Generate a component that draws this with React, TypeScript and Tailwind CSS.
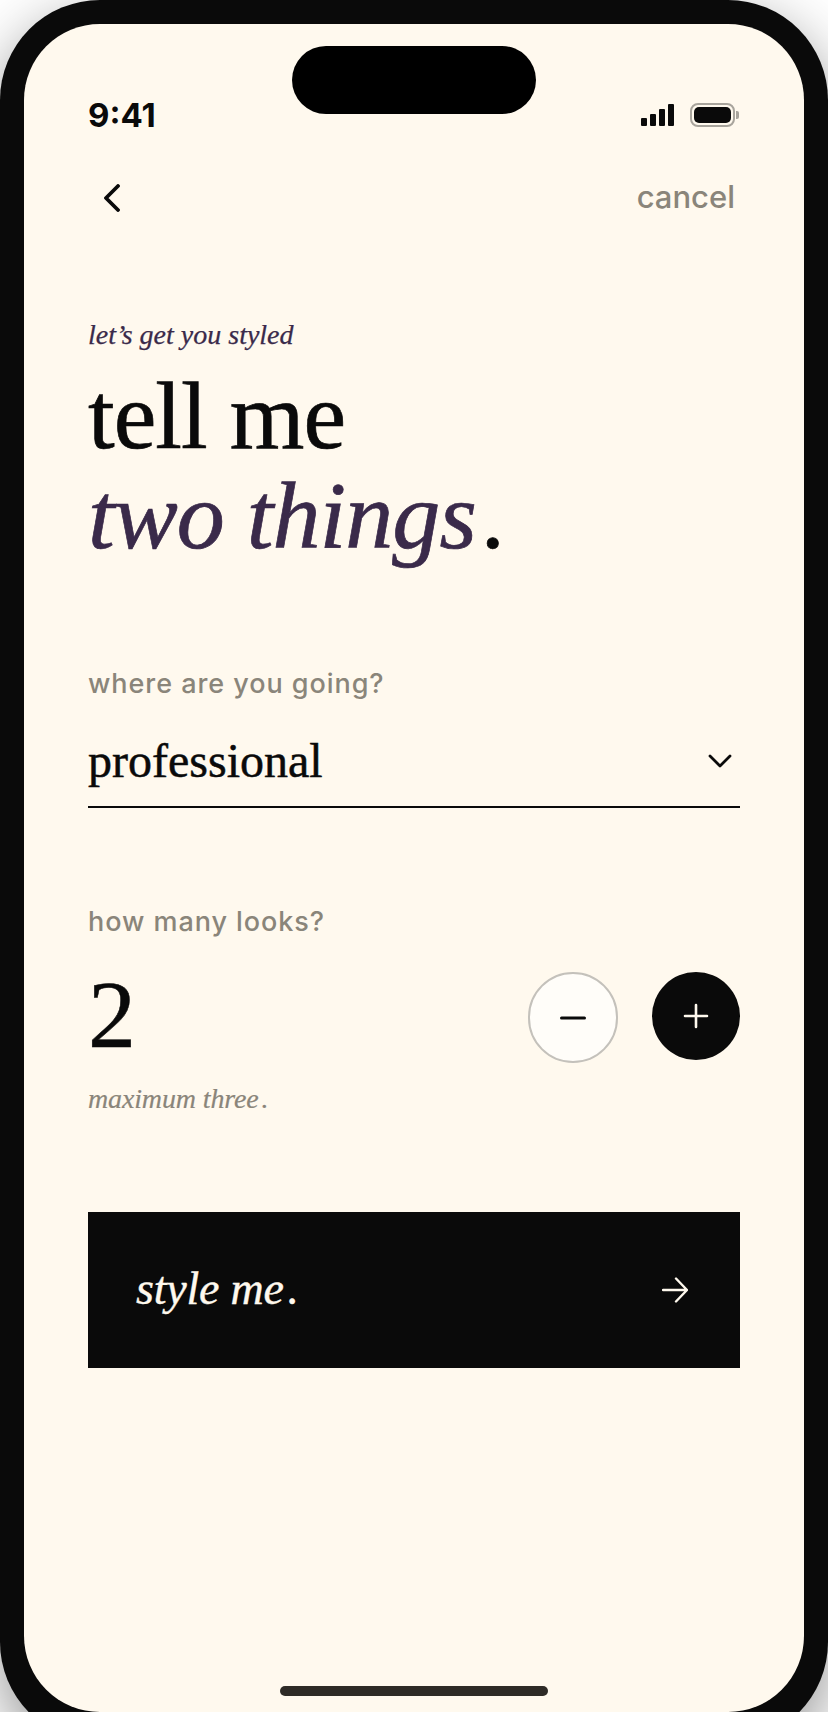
import React from "react";

const SERIF = "font-['Liberation_Serif',serif]";
const SANS = "font-['Inter',sans-serif]";

function StatusIcons() {
  return (
    <div className="flex items-center">
      <div className="flex items-end gap-[3px] h-[22px]">
        <span className="w-[6px] h-[8px] rounded-[1px] bg-[#0a0a0a]" />
        <span className="w-[6px] h-[12px] rounded-[1px] bg-[#0a0a0a]" />
        <span className="w-[6px] h-[17px] rounded-[1px] bg-[#0a0a0a]" />
        <span className="w-[6px] h-[22px] rounded-[1px] bg-[#0a0a0a]" />
      </div>
      <div className="ml-[16px] flex items-center">
        <div className="w-[45px] h-[24px] rounded-[8px] border-2 border-[#a8a49c] p-[2px]">
          <div className="w-full h-full rounded-[5px] bg-[#0a0a0a]" />
        </div>
        <span className="ml-[1px] w-[3px] h-[8px] rounded-r-[2px] bg-[#a8a49c]" />
      </div>
    </div>
  );
}

export default function App() {
  return (
    <div className="h-[1712px] w-[828px] overflow-hidden bg-white">
      <div className="h-[1742px] w-[828px] rounded-[100px] bg-[#0a0a0a] p-[24px] shadow-[0_20px_60px_rgba(0,0,0,0.42)]">
        <div className="relative flex h-[1688px] flex-col rounded-[76px] bg-[#fff9ee] px-[64px] pb-[16px] pt-[74px] text-[#0a0a0a]">
          <div className="absolute left-[268px] top-[22px] h-[68px] w-[244px] rounded-full bg-black" />

          <div className="flex h-[34px] items-center justify-between pr-[1px]">
            <span className={`${SANS} text-[33px] font-bold leading-[34px]`}>9:41</span>
            <StatusIcons />
          </div>

          <div className="mt-[46px] flex h-[40px] items-center justify-between">
            <svg className="ml-[16px]" width="16" height="28" viewBox="0 0 16 28" fill="none" stroke="#0a0a0a" strokeWidth="3.8" strokeLinecap="round" strokeLinejoin="round">
              <path d="M14 2 2 14l12 12" />
            </svg>
            <span className={`${SANS} -mt-[2px] mr-[5px] text-[31px] font-medium leading-[38px] text-[#8a857a]`}>cancel</span>
          </div>

          <p className={`${SERIF} mt-[99px] text-[28px] italic leading-[36px] text-[#3a2a4a] [-webkit-text-stroke:0.25px_currentColor]`}>
            let’s get you styled
          </p>
          <h1 className={`${SERIF} mt-[13px] text-[96px] font-normal leading-[100px] tracking-[-0.01em] [-webkit-text-stroke:0.7px_currentColor]`}>
            tell me
            <br />
            <em className="text-[#3a2a4a]">two things</em>
            <span className="ml-[5px]">.</span>
          </h1>

          <label className={`${SANS} mt-[102px] text-[27px] font-medium leading-[32px] tracking-[0.035em] text-[#8a857a]`}>
            where are you going?
          </label>
          <div className="mt-[31px] flex items-center justify-between border-b-2 border-[#0a0a0a] pb-[15px]">
            <span className={`${SERIF} text-[48px] leading-[60px] [-webkit-text-stroke:0.5px_currentColor]`}>professional</span>
            <svg className="mr-[8px]" width="24" height="14" viewBox="0 0 24 14" fill="none" stroke="#0a0a0a" strokeWidth="2.8" strokeLinecap="round" strokeLinejoin="round">
              <path d="M2 2l10 10L22 2" />
            </svg>
          </div>

          <label className={`${SANS} mt-[98px] text-[27px] font-medium leading-[32px] tracking-[0.035em] text-[#8a857a]`}>
            how many looks?
          </label>
          <div className="mt-[34px] flex h-[91px] items-start justify-between">
            <span className={`${SERIF} text-[96px] leading-[85px] [-webkit-text-stroke:0.5px_currentColor]`}>2</span>
            <div className="flex items-start gap-[34px]">
              <button className="flex h-[91px] w-[90px] items-center justify-center rounded-full border-2 border-[#c4c1bb] bg-[#fffdf9]">
                <svg width="26" height="4" viewBox="0 0 26 4"><path d="M1.5 2h23" stroke="#0a0a0a" strokeWidth="3" strokeLinecap="round" /></svg>
              </button>
              <button className="flex h-[88px] w-[88px] items-center justify-center rounded-full bg-[#0a0a0a]">
                <svg width="26" height="26" viewBox="0 0 26 26"><path d="M2 13h22M13 2v22" stroke="#fff9ee" strokeWidth="2.6" strokeLinecap="round" /></svg>
              </button>
            </div>
          </div>
          <p className={`${SERIF} mt-[20px] text-[28px] italic leading-[32px] tracking-[-0.005em] text-[#8a857a] [-webkit-text-stroke:0.2px_currentColor]`}>
            maximum three<span className="ml-[3px]">.</span>
          </p>

          <button className="mt-[97px] flex h-[156px] items-center justify-between bg-[#0a0a0a] pl-[48px] pr-[52px] text-[#fff9ee]">
            <span className={`${SERIF} -mt-[2px] text-[46px] italic leading-[60px] tracking-[-0.005em] [-webkit-text-stroke:0.4px_currentColor]`}>
              style me<span className="ml-[4px]">.</span>
            </span>
            <svg width="26" height="26" viewBox="0 0 26 26" fill="none" stroke="currentColor" strokeWidth="2.4" strokeLinecap="round" strokeLinejoin="round">
              <path d="M1 13h24M14 1.5 25 13 14 24.5" />
            </svg>
          </button>

          <div className="mt-auto h-[10px] w-[268px] self-center rounded-full bg-[#2e2b26]" />
        </div>
      </div>
    </div>
  );
}
